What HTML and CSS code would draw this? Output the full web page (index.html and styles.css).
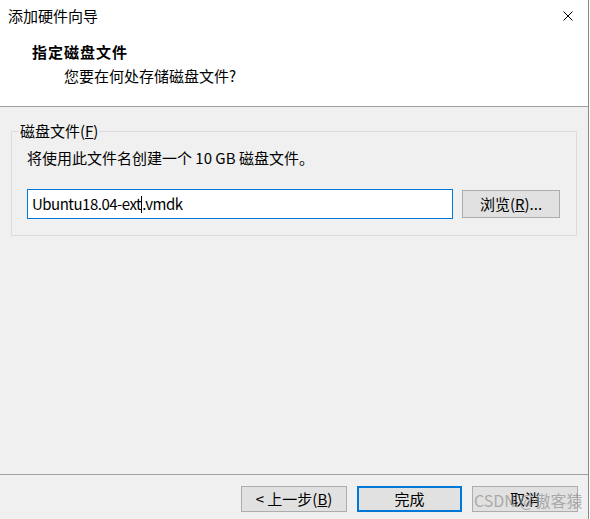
FILE: index.html
```html
<!DOCTYPE html>
<html lang="zh-CN">
<head>
    <meta charset="UTF-8">
    <title>添加硬件向导</title>
    <link rel="stylesheet" href="styles.css">
</head>
<body>
    <div class="window">
        <div class="titlebar">
            <span class="title">添加硬件向导</span>
            <span class="close">
                <svg width="10" height="10" viewBox="0 0 10 10"><path d="M0.5 0.5L9.5 9.5M9.5 0.5L0.5 9.5" stroke="#000" stroke-width="1"/></svg>
            </span>
        </div>
        <div class="header">
            <div class="head-title">指定磁盘文件</div>
            <div class="head-sub">您要在何处存储磁盘文件?</div>
        </div>
        <div class="content">
            <fieldset class="group">
                <legend>磁盘文件(<u>F</u>)</legend>
                <p class="hint">将使用此文件名创建一个 10 GB 磁盘文件。</p>
                <div class="file-row">
                    <div class="input">Ubuntu18.04-ext<span class="caret"></span>.vmdk</div>
                    <button class="btn browse">浏览(<u>R</u>)...</button>
                </div>
            </fieldset>
        </div>
        <div class="footer">
            <button class="btn">&lt; 上一步(<u>B</u>)</button>
            <button class="btn default">完成</button>
            <button class="btn">取消</button>
            <span class="watermark">CSDN @傲客猿</span>
        </div>
    </div>
</body>
</html>
```

FILE: styles.css
```css
body {
    margin: 0;
    background: #fff;
    font-family: "Noto Sans CJK SC", "Noto Sans", sans-serif;
    font-size: 15px;
    color: #000;
}
.window {
    width: 588px;
    height: 519px;
    border-right: 1px solid #888;
    display: flex;
    flex-direction: column;
    overflow: hidden;
}
.titlebar {
    height: 32px;
    display: flex;
    align-items: center;
    justify-content: space-between;
    padding: 0 15px 0 8px;
    background: #fff;
}
.title {
    line-height: 32px;
}
.close {
    display: flex;
}
.header {
    height: 75px;
    box-sizing: border-box;
    padding: 10px 0 0 32px;
    background: #fff;
    border-bottom: 1px solid #a0a0a0;
}
.head-title {
    font-weight: bold;
    line-height: 20px;
    letter-spacing: 1px;
}
.head-sub {
    line-height: 20px;
    margin-top: 4px;
    padding-left: 32px;
}
.content {
    flex: 1;
    background: #f0f0f0;
    padding: 14px 11px 0 11px;
}
.group {
    margin: 0;
    width: 566px;
    box-sizing: border-box;
    border: 1px solid #dcdcdc;
    padding: 7px 0 16px 15px;
}
.group legend {
    margin-left: -8px;
    padding: 0 1px;
    line-height: 20px;
}
.hint {
    margin: 0;
    line-height: 20px;
}
.file-row {
    display: flex;
    align-items: center;
    gap: 9px;
    margin-top: 21px;
}
.input {
    width: 426px;
    height: 30px;
    box-sizing: border-box;
    border: 1px solid #0078d7;
    background: #fff;
    padding: 0 4px;
    line-height: 28px;
    letter-spacing: -0.5px;
}
.caret {
    display: inline-block;
    width: 1px;
    height: 17px;
    background: #000;
    vertical-align: -3px;
}
.btn {
    font-family: inherit;
    font-size: 15px;
    color: #000;
    background: #e1e1e1;
    border: 1px solid #adadad;
    height: 26px;
    width: 106px;
    padding: 0;
    line-height: 22px;
}
.browse {
    width: 98px;
    height: 28px;
}
.btn.default {
    border: 2px solid #0078d7;
    width: 105px;
}
.footer {
    position: relative;
    height: 45px;
    box-sizing: border-box;
    background: #f0f0f0;
    border-top: 1px solid #a0a0a0;
    display: flex;
    justify-content: flex-end;
    align-items: flex-start;
    gap: 10px;
    padding: 11px 10px 0 0;
}
.watermark {
    position: absolute;
    left: 474px;
    top: 15px;
    font-size: 16px;
    line-height: 20px;
    color: rgba(150, 150, 150, 0.75);
    white-space: nowrap;
}
```
